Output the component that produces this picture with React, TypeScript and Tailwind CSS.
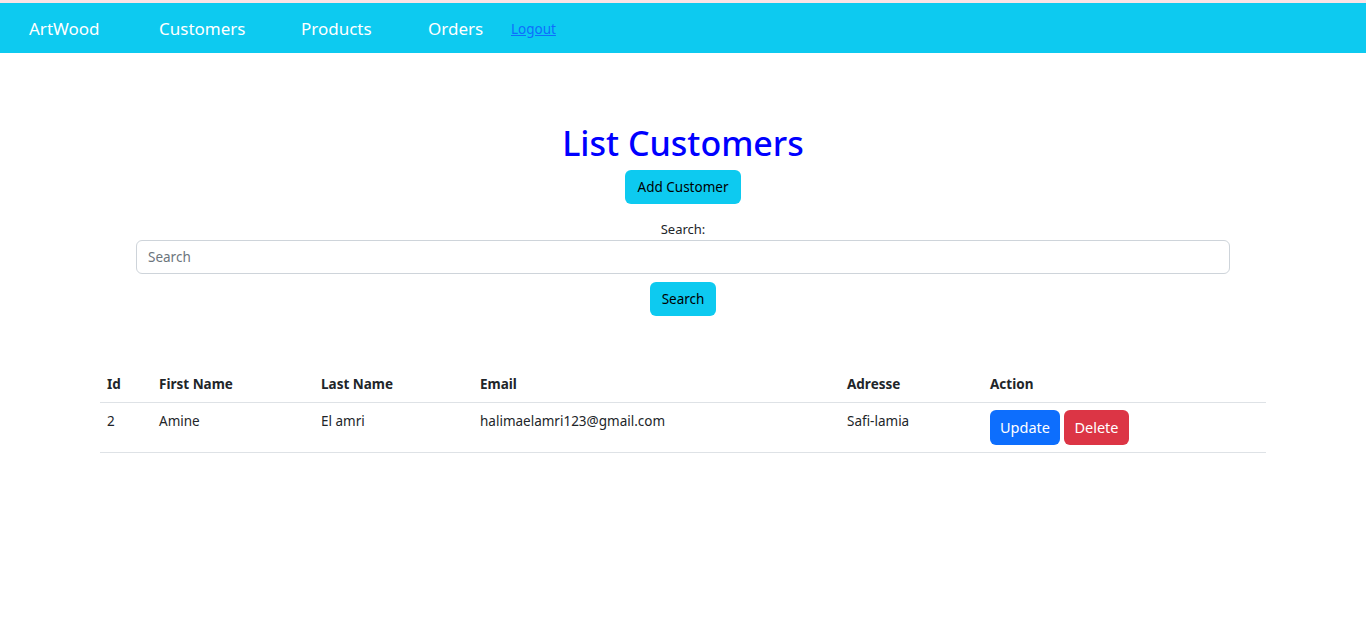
import { FC } from "react";

const font = { fontFamily: '"Noto Sans", "Open Sans", sans-serif' };

const Navbar: FC = () => {
  return (
    <div className="border-t-[3px] border-[#fbe3e6] bg-[#0dcaf0]">
      <div className="flex h-[50px] items-center pl-[29px] pt-[2px] text-white">
        <span className="w-[130px] text-[17px]">ArtWood</span>
        <span className="w-[142px] text-[17px]">Customers</span>
        <span className="w-[127px] text-[17px]">Products</span>
        <span className="w-[83px] text-[17px]">Orders</span>
        <a href="#" className="text-[13.5px] text-[#0d6efd] underline">
          Logout
        </a>
      </div>
    </div>
  );
};

const customers = [
  { id: 2, first: "Amine", last: "El amri", email: "halimaelamri123@gmail.com", adresse: "Safi-lamia" },
];

export default function App() {
  return (
    <div className="min-h-screen bg-white text-[#212529]" style={font}>
      <Navbar />
      <div className="flex flex-col items-center pt-[66px]">
        <h1 className="text-[34px] leading-[48px] font-medium text-[#0000ff]">List Customers</h1>
        <button className="mt-[3px] h-[34px] w-[116px] rounded-md bg-[#0dcaf0] text-[13.5px] text-black">
          Add Customer
        </button>
        <label className="mt-[15px] text-[13px] leading-[21px]">Search:</label>
        <input
          placeholder="Search"
          className="h-[34px] w-[1094px] rounded-md border border-[#ced4da] px-[11px] text-[13.5px] placeholder:text-[#6c757d]"
        />
        <button className="mt-2 h-[34px] w-[66px] rounded-md bg-[#0dcaf0] text-[13.5px] text-black">
          Search
        </button>

        <table className="mt-[50px] w-[1166px] border-collapse text-[13.5px]">
          <thead>
            <tr className="border-b border-[#dee2e6] text-left">
              <th className="w-[51px] px-[7px] py-2 font-bold">Id</th>
              <th className="w-[162px] px-[8px] py-2 font-bold">First Name</th>
              <th className="w-[159px] px-[8px] py-2 font-bold">Last Name</th>
              <th className="w-[367px] px-[8px] py-2 font-bold">Email</th>
              <th className="w-[143px] px-[8px] py-2 font-bold">Adresse</th>
              <th className="px-[8px] py-2 font-bold">Action</th>
            </tr>
          </thead>
          <tbody>
            {customers.map((c) => (
              <tr key={c.id} className="border-b border-[#dee2e6] align-top">
                <td className="px-[7px] py-2">{c.id}</td>
                <td className="px-[8px] py-2">{c.first}</td>
                <td className="px-[8px] py-2">{c.last}</td>
                <td className="px-[8px] py-2">{c.email}</td>
                <td className="px-[8px] py-2">{c.adresse}</td>
                <td className="px-[8px] pt-[7px] pb-[7px]">
                  <div className="flex gap-1">
                    <button className="h-[35px] w-[70px] rounded-md bg-[#0d6efd] text-[14.5px] text-white">
                      Update
                    </button>
                    <button className="h-[35px] w-[65px] rounded-md bg-[#dc3545] text-[14.5px] text-white">
                      Delete
                    </button>
                  </div>
                </td>
              </tr>
            ))}
          </tbody>
        </table>
      </div>
    </div>
  );
}
